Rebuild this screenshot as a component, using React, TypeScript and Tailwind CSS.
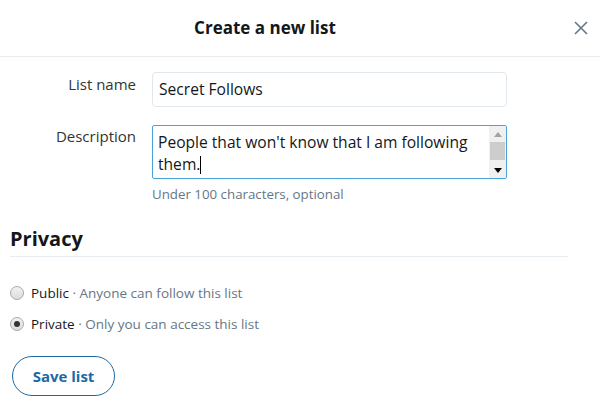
import React from "react";

function Radio({ checked }: { checked: boolean }) {
  return (
    <span className="flex h-[14px] w-[14px] shrink-0 items-center justify-center rounded-full border border-[#a9a9a9] bg-gradient-to-b from-[#f2f2f2] to-[#dcdcdc]">
      {checked && <span className="h-[6px] w-[6px] rounded-full bg-[#333]" />}
    </span>
  );
}

export default function App() {
  return (
    <div className="h-[409px] w-[600px] overflow-hidden bg-white text-[#14171a] [font-family:'Open_Sans',sans-serif]">
      <div className="flex h-[57px] items-center border-b border-[#e6ecf0] pl-[16px] pr-[6px]">
        <div className="flex-1 pr-[54px] text-center text-[17px] font-bold">Create a new list</div>
        <button className="flex h-[26px] w-[26px] items-center justify-center text-[#657786]">
          <svg width="16" height="16" viewBox="0 0 16 16" fill="none" stroke="currentColor" strokeWidth="1.6">
            <path d="M2 2 L14 14 M14 2 L2 14" />
          </svg>
        </button>
      </div>

      <div className="flex flex-col pt-[15px]">
        <div className="flex items-start">
          <div className="w-[136px] pt-[1px] text-right text-[15px] text-[#333]">List name</div>
          <div className="ml-[16px] flex h-[35px] w-[355px] items-center rounded-[4px] border border-[#e1e8ed] px-[6px] text-[15.6px] text-[#14171a]">
            Secret Follows
          </div>
        </div>

        <div className="mt-[18px] flex items-start">
          <div className="w-[136px] text-right text-[15px] text-[#333]">Description</div>
          <div className="ml-[16px] flex w-[355px] flex-col">
            <div className="flex h-[54px] rounded-[2px] border-[1.5px] border-[#4aa3d8]">
              <div className="flex-1 px-[5px] pt-[6px] text-[15.6px] leading-[20px] text-[#14171a]">
                People that won&#39;t know that I am following
                <br />
                them.<span className="inline-block h-[18px] w-[1px] translate-y-[4px] bg-black" />
              </div>
              <div className="flex w-[17px] flex-col items-center bg-[#f0f0f0]">
                <div className="flex h-[16px] items-center justify-center">
                  <svg width="8" height="5" viewBox="0 0 8 5"><path d="M0 5 L4 0 L8 5Z" fill="#a3a3a3" /></svg>
                </div>
                <div className="h-[18px] w-[15px] bg-[#cdcdcd]" />
                <div className="flex-1" />
                <div className="flex h-[16px] items-center justify-center">
                  <svg width="8" height="5" viewBox="0 0 8 5"><path d="M0 0 L8 0 L4 5Z" fill="#000" /></svg>
                </div>
              </div>
            </div>
            <div className="mt-[6px] text-[13.3px] text-[#657786]">Under 100 characters, optional</div>
          </div>
        </div>

        <div className="mx-[10px] mt-[19px] w-[558px] border-b border-[#e6ecf0] pb-[2px] text-[20px] font-bold text-[#14171a]">
          Privacy
        </div>

        <div className="mt-[26px] flex flex-col gap-[11px] px-[10px] text-[13.5px]">
          <label className="flex items-center gap-[7px]">
            <Radio checked={false} />
            <span>
              <span className="text-[#14171a]">Public</span>
              <span className="text-[#657786]"> · Anyone can follow this list</span>
            </span>
          </label>
          <label className="flex items-center gap-[7px]">
            <Radio checked={true} />
            <span>
              <span className="text-[#14171a]">Private</span>
              <span className="text-[#657786]"> · Only you can access this list</span>
            </span>
          </label>
        </div>

        <div className="mt-[22px] px-[12px]">
          <button className="flex h-[40px] w-[103px] items-center justify-center rounded-full border-[1.5px] border-[#1b6aa5] text-[15px] font-bold text-[#1b6aa5]">
            Save list
          </button>
        </div>
      </div>
    </div>
  );
}
